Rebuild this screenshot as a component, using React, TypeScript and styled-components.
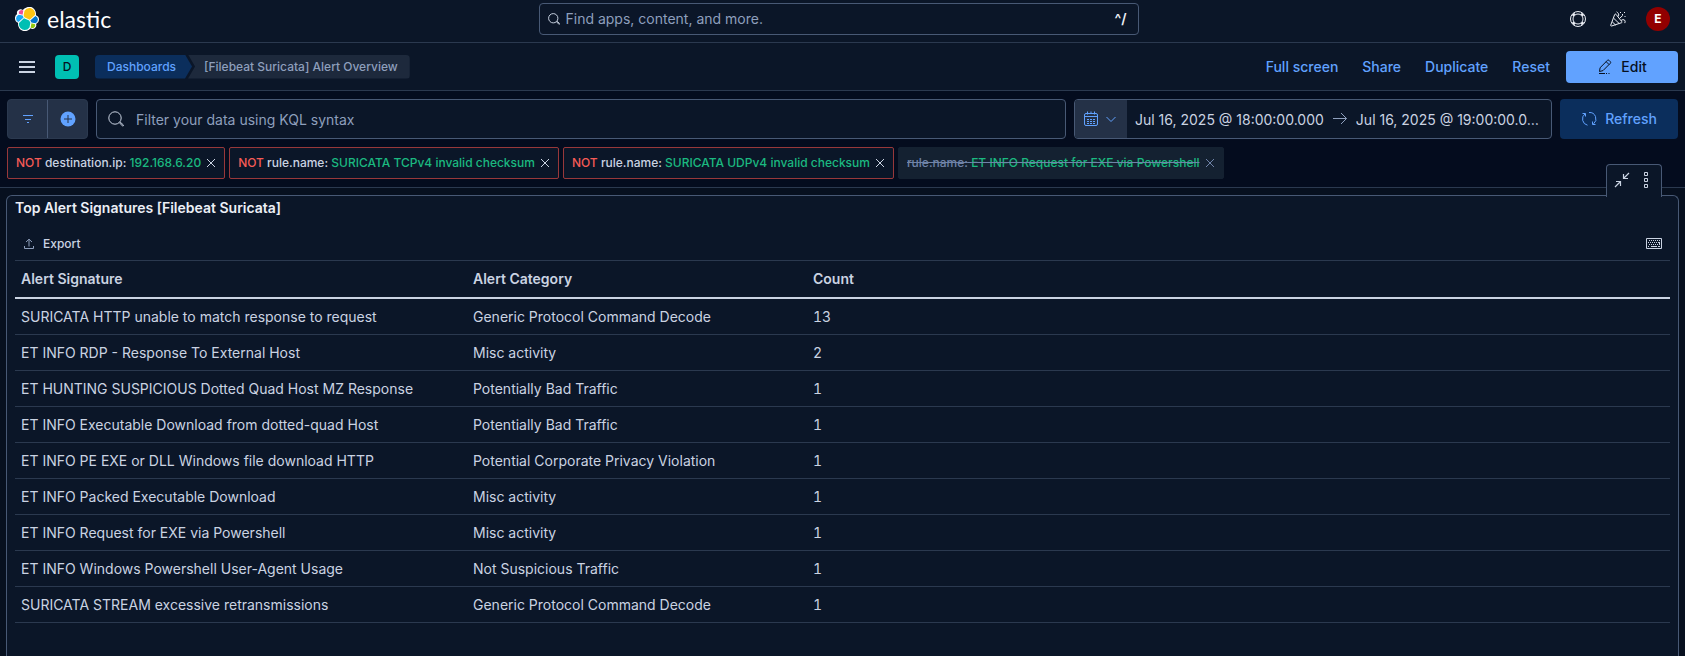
import React from "react";
import styled, { createGlobalStyle, css } from "styled-components";

const c = {
  page: "#07101f",
  bar: "#040c1e",
  panel: "#0b1628",
  line: "#2b394f",
  field: "#485975",
  text: "#cad3e2",
  subdued: "#8e9fbc",
  heading: "#eceff6",
  primary: "#61a2ff",
  primaryBase: "#0b2e5c",
  addon: "#243147",
  green: "#1bb980",
  red: "#f65b56",
  redLine: "#98383a",
};

const GlobalStyle = createGlobalStyle`
  * { box-sizing: border-box; }
  html, body, #root { margin: 0; height: 100%; }
  body {
    background: ${c.page};
    color: ${c.text};
    font: 400 14px/20px Inter, "Liberation Sans", sans-serif;
  }
  button, input { font: inherit; color: inherit; margin: 0; }
  button { border: 0; padding: 0; background: none; cursor: pointer; }
  a { text-decoration: none; color: inherit; }
  svg { display: block; flex: none; }
`;

const Page = styled.div`
  display: flex;
  flex-direction: column;
  min-height: 100%;
`;

const TopBar = styled.header`
  display: grid;
  grid-template-columns: 1fr minmax(200px, 600px) 1fr;
  align-items: center;
  padding: 3px 15px 7px 7px;
  background: ${c.panel};
  border-bottom: 1px solid ${c.line};
`;

const Brand = styled.a`
  display: flex;
  align-items: center;
  gap: 8px;
  padding-left: 8px;
  color: #fff;
  font: 400 23px/32px Lato, sans-serif;
`;

const GlobalSearch = styled.label`
  display: flex;
  align-items: center;
  gap: 6px;
  height: 32px;
  padding: 0 11px 0 8px;
  border: 1px solid ${c.field};
  border-radius: 4px;
`;

const BareInput = styled.input`
  flex: 1;
  min-width: 0;
  padding: 0;
  border: 0;
  outline: 0;
  background: none;
  &::placeholder { color: ${c.subdued}; opacity: 1; }
`;

const Shortcut = styled.span`
  color: ${c.heading};
  font-weight: 600;
`;

const TopActions = styled.div`
  display: flex;
  justify-content: flex-end;
  align-items: center;
  gap: 16px;
  color: ${c.heading};
`;

const IconButton = styled.button`
  display: grid;
  place-items: center;
  width: 24px;
  height: 24px;
`;

const UserAvatar = styled(IconButton)`
  border-radius: 50%;
  background: #920000;
  color: #fff;
  font-size: 12px;
  font-weight: 700;
`;

const NavBar = styled.div`
  display: flex;
  align-items: center;
  height: 48px;
  padding: 0 7px 0 17px;
  background: ${c.panel};
  border-bottom: 1px solid ${c.line};
`;

const SpaceBadge = styled.button`
  width: 24px;
  height: 24px;
  margin: 0 16px 0 18px;
  border-radius: 4px;
  background: #00bfb3;
  color: #07101f;
  font-size: 12px;
  font-weight: 500;
`;

const Crumbs = styled.nav`
  display: flex;
  font-size: 12px;
  font-weight: 500;
  line-height: 24px;
`;

const CrumbLink = styled.a`
  padding: 0 16px 0 12px;
  border-radius: 4px 0 0 4px;
  background: ${c.primaryBase};
  color: ${c.primary};
  clip-path: polygon(0 0, calc(100% - 7px) 0, 100% 50%, calc(100% - 7px) 100%, 0 100%);
`;

const CrumbCurrent = styled.span`
  margin-left: -4px;
  padding: 0 12px 0 16px;
  border-radius: 0 4px 4px 0;
  background: #1d293c;
  color: ${c.subdued};
  clip-path: polygon(0 0, 100% 0, 100% 100%, 0 100%, 7px 50%);
`;

const NavActions = styled.div`
  display: flex;
  align-items: center;
  gap: 24px;
  margin-left: auto;
  color: ${c.primary};
  font-weight: 500;
`;

const ActionButton = styled.button<{ $solid?: boolean }>`
  display: flex;
  align-items: center;
  justify-content: center;
  gap: 8px;
  border-radius: 4px;
  font-weight: 500;
  ${(p) =>
    p.$solid
      ? css`
          width: 112px;
          height: 32px;
          margin-left: -8px;
          background: ${c.primary};
          color: #07101f;
        `
      : css`
          width: 118px;
          height: 40px;
          background: ${c.primaryBase};
          color: ${c.primary};
        `}
`;

const SearchArea = styled.section`
  display: flex;
  flex-direction: column;
  gap: 8px;
  padding: 8px 7px;
  background: ${c.bar};
  border-bottom: 1px solid ${c.line};
`;

const QueryRow = styled.div`
  display: flex;
  gap: 8px;
  height: 40px;
`;

const FilterButtons = styled.div`
  display: flex;
  width: 81px;
  border: 1px solid ${c.line};
  border-radius: 4px;
  background: ${c.addon};
  color: ${c.primary};
`;

const FilterButton = styled.button`
  display: flex;
  flex: 1;
  align-items: center;
  justify-content: center;
  & + & { border-left: 1px solid ${c.field}; }
`;

const QueryField = styled.label`
  display: flex;
  flex: 1;
  align-items: center;
  gap: 12px;
  padding: 0 11px;
  border: 1px solid ${c.field};
  border-radius: 4px;
  background: ${c.panel};
`;

const QueryInput = styled(BareInput)`
  padding-top: 2px;
`;

const DateField = styled.div`
  display: flex;
  align-items: center;
  width: 478px;
  border: 1px solid ${c.field};
  border-radius: 4px;
  background: ${c.panel};
  overflow: hidden;
`;

const DateMenu = styled.button`
  display: flex;
  align-items: center;
  gap: 4px;
  height: 100%;
  margin-right: 8px;
  padding: 0 8px;
  background: ${c.addon};
  color: ${c.primary};
`;

const DateButton = styled.button`
  min-width: 0;
  padding-top: 2px;
  overflow: hidden;
  text-overflow: ellipsis;
  white-space: nowrap;
`;

const DateArrow = styled.span`
  padding: 0 8px;
  color: ${c.subdued};
`;

const Pills = styled.div`
  display: flex;
  flex-wrap: wrap;
  gap: 4px;
`;

const Pill = styled.div<{ $off?: boolean }>`
  display: flex;
  align-items: center;
  gap: 4px;
  height: 32px;
  padding: 0 7px 0 8px;
  border: 1px solid ${(p) => (p.$off ? "#142131" : c.redLine)};
  border-radius: 2px;
  background: ${(p) => (p.$off ? "#142131" : c.panel)};
  color: ${(p) => (p.$off ? "#6f83a8" : c.text)};
  font-size: 12px;
  font-weight: 500;
  white-space: nowrap;
`;

const PillLabel = styled.button<{ $off?: boolean }>`
  font-weight: 500;
  text-decoration: ${(p) => (p.$off ? "line-through" : "none")};
`;

const Not = styled.span`
  color: ${c.red};
`;

const Value = styled.span`
  color: ${c.green};
`;

const Panel = styled.main`
  position: relative;
  flex: 1;
  margin: 7px 6px 0;
  padding: 0 8px 24px;
  border: 1px solid ${c.field};
  border-bottom: 0;
  border-radius: 6px 6px 0 0;
  background: ${c.panel};
`;

const PanelTab = styled.div`
  position: absolute;
  right: 16px;
  bottom: 100%;
  display: flex;
  justify-content: space-between;
  align-items: center;
  width: 56px;
  height: 33px;
  margin-bottom: -1px;
  padding: 0 12px 2px 7px;
  border: 1px solid ${c.field};
  border-bottom: 0;
  border-radius: 4px 4px 0 0;
  background: ${c.panel};
`;

const PanelTitle = styled.h2`
  margin: 0;
  color: ${c.heading};
  font-size: 14px;
  font-weight: 600;
  line-height: 24px;
`;

const GridTools = styled.div`
  display: flex;
  justify-content: space-between;
  align-items: center;
  height: 40px;
  padding: 8px 8px 0;
`;

const ExportButton = styled.button`
  display: flex;
  align-items: center;
  gap: 8px;
  font-size: 12px;
  font-weight: 500;
`;

const Grid = styled.table`
  width: 100%;
  border-collapse: separate;
  border-spacing: 0;
  table-layout: fixed;
  border-top: 1px solid ${c.line};
`;

const HeadCell = styled.th<{ $width?: number }>`
  width: ${(p) => (p.$width ? `${p.$width}px` : "auto")};
  height: 38px;
  padding: 0 6px;
  border-bottom: 2px solid ${c.text};
  font-weight: 600;
  text-align: left;
`;

const Cell = styled.td<{ $numeric?: boolean }>`
  height: 36px;
  padding: 0 6px;
  border-bottom: 1px solid ${c.line};
  font-variant-numeric: ${(p) => (p.$numeric ? "tabular-nums" : "normal")};
`;

const SearchIcon = ({ size }: { size: number }) => (
  <svg width={size} height={size} viewBox="0 0 16 16" fill="none" stroke={c.text} strokeWidth={size < 16 ? 1.3 : 1}>
    <circle cx="7" cy="7" r="6.2" />
    <path d="M11.3 11.6 14.4 14.9q.5.5.9 0t0-1L12.1 11" />
  </svg>
);

const ElasticLogo = () => (
  <svg width="24" height="24" viewBox="0 0 32 32">
    <path fill="#fff" d="M32 16.77a6.334 6.334 0 0 0-1.14-3.63 6.269 6.269 0 0 0-3.02-2.3 9.044 9.044 0 0 0 .15-1.71 9.1 9.1 0 0 0-1.72-5.38A9.01 9.01 0 0 0 15.4.54a9.02 9.02 0 0 0-5.02 3.38 4.83 4.83 0 0 0-2.95-1.01 4.86 4.86 0 0 0-4.59 6.5A6.38 6.38 0 0 0 0 15.2c0 1.31.4 2.59 1.15 3.66a6.34 6.34 0 0 0 3.03 2.3 9.12 9.12 0 0 0-.15 1.71 9.08 9.08 0 0 0 1.72 5.36 8.99 8.99 0 0 0 14.87-.03 4.83 4.83 0 0 0 2.95 1.01 4.86 4.86 0 0 0 4.59-6.5A6.38 6.38 0 0 0 32 16.77" />
    <path fill="#FEC514" d="m12.58 13.787 7.002 3.211 7.066-6.213a7.849 7.849 0 0 0 .152-1.557c0-4.287-3.464-7.762-7.737-7.762a7.715 7.715 0 0 0-6.377 3.374l-1.176 6.118z" />
    <path fill="#00BFB3" d="M5.333 21.215a7.99 7.99 0 0 0-.15 1.586c0 4.299 3.477 7.784 7.764 7.784a7.755 7.755 0 0 0 6.407-3.412l1.166-6.095-1.557-2.985-7.03-3.211z" />
    <path fill="#F04E98" d="m5.288 9.067 4.8 1.137 1.05-5.468a3.777 3.777 0 0 0-5.85 4.33" />
    <path fill="#1BA9F5" d="M4.872 10.214a5.294 5.294 0 0 0-3.5 4.995 5.265 5.265 0 0 0 3.374 4.927l6.733-6.102-1.236-2.65z" />
    <path fill="#93C90E" d="M20.872 27.171a3.772 3.772 0 0 0 5.853-4.327l-4.795-1.125z" />
    <path fill="#07C" d="m21.846 20.563 5.28 1.238a5.293 5.293 0 0 0 3.5-4.997 5.265 5.265 0 0 0-3.381-4.917l-6.904 6.068z" />
  </svg>
);

const HelpIcon = () => (
  <svg width="16" height="16" viewBox="0 0 16 16" fill="none" stroke="currentColor">
    <circle cx="8" cy="8" r="7.5" />
    <circle cx="8" cy="8" r="5" />
    <path strokeWidth="3" d="m2.900 2.900 1.500 1.500M13.100 2.900l-1.500 1.500M2.900 13.100l1.500-1.500M13.100 13.100l-1.500-1.500" />
  </svg>
);

const CheerIcon = () => (
  <svg width="16" height="16" viewBox="0 0 16 16" fill="none" stroke="currentColor">
    <path d="M4.7 3.500.7 14.200q-.2.9.9.8l10-3.300q.8-.4.2-1L6 3.300q-.8-.7-1.300.2Z" />
    <path d="m3.600 7.200 5.600 5.300M2.200 10.800l3.600 3.400M8 5.600q1.600-1.400.2-3.400-.6-.8-1.600-1.400M9.600 7.400l3.200-3M11 9.500q2-1.600 3.600-.4 1 1 .2 3" />
    <path d="M10 1.500h1M12 3.500h1M14 1.500h1M14.500 5.500h1" />
  </svg>
);

const PencilIcon = () => (
  <svg width="16" height="16" viewBox="0 0 16 16" fill="none" stroke="currentColor">
    <path d="m2.500 12.500.6-3.800L10.500 1.300q.8-.6 1.500 0l1.400 1.500q.6.700 0 1.400L6 11.600ZM9.200 2.700l2.900 2.900M2 14.500h6M9 14.500h1M11.500 14.500h1" />
  </svg>
);

const MenuIcon = () => (
  <svg width="20" height="16" viewBox="0 0 20 16" fill="currentColor">
    <path d="M2 2h16v2H2zM2 7h16v2H2zM2 12h16v2H2z" />
  </svg>
);

const FilterIcon = () => (
  <svg width="16" height="16" viewBox="0 0 16 16" fill="currentColor">
    <path d="M3 4h10v1H3zM5 8h6v1H5zM7 11h2v1H7z" />
  </svg>
);

const PlusIcon = () => (
  <svg width="16" height="16" viewBox="0 0 16 16">
    <circle cx="8" cy="8" r="7.500" fill="currentColor" />
    <path stroke={c.addon} d="M8 4v8M4 8h8" />
  </svg>
);

const CalendarIcon = () => (
  <svg width="16" height="16" viewBox="0 0 16 16" fill="none" stroke="currentColor">
    <rect x="1.500" y="2.500" width="13" height="12" rx="1.500" />
    <path d="M4.500.5v3M8 .5v2M11.500.5v3M2 5.500h12" />
    <path strokeDasharray="2 1" d="M4 8.500h8M4 10.500h8M4 12.500h8" />
  </svg>
);

const ChevronIcon = () => (
  <svg width="16" height="16" viewBox="0 0 16 16" fill="none" stroke="currentColor">
    <path d="m3.500 6 4.500 4.500L12.500 6" />
  </svg>
);

const ArrowIcon = () => (
  <svg width="16" height="16" viewBox="0 0 16 16" fill="none" stroke="currentColor">
    <path d="M1 7.500h13.500M9 2l5.500 5.500L9 13" />
  </svg>
);

const RefreshIcon = () => (
  <svg width="16" height="16" viewBox="0 0 16 16" fill="none" stroke="currentColor">
    <path d="M6.500 14.200A6.400 6.400 0 0 1 4 2.900M1.500 2.500h3v3M8 1.500a6.400 6.400 0 0 1 4.500 11.400M14.500 13.500h-3v-3" />
  </svg>
);

const CrossIcon = () => (
  <svg width="12" height="12" viewBox="0 0 12 12" fill="none" stroke="currentColor">
    <path d="m2 2 8 8M10 2l-8 8" />
  </svg>
);

const MinimizeIcon = () => (
  <svg width="16" height="16" viewBox="0 0 16 16" fill="none" stroke="currentColor" strokeWidth="1.2">
    <path d="M15 1 9.500 6.500M9.500 2v4.500H14M1 15l5.500-5.500M2 9.500h4.500V14" />
  </svg>
);

const BoxesIcon = () => (
  <svg width="5" height="16" viewBox="0 0 5 16" fill="none" stroke="currentColor">
    <path d="M.5.5h3v3h-3zM.5 6.500h3v3h-3zM.5 12.500h3v3h-3z" />
  </svg>
);

const ExportIcon = () => (
  <svg width="12" height="12" viewBox="0 0 12 12" fill="none" stroke={c.subdued}>
    <path d="M6 8.500v-7M3 4l3-2.800L9 4M1.500 8v2.500h9V8" />
  </svg>
);

const KeyboardIcon = () => (
  <svg width="16" height="16" viewBox="0 0 16 16" fill="none" stroke="currentColor">
    <path d="M.5 2.500h15v10H.5z" />
    <path strokeDasharray="1 1" d="M3 4.500h11M2 6.500h11M3 8.500h11" />
    <path d="M2 10.500h1M5 10.500h6M12 10.500h2M13.500 6v3" />
  </svg>
);

const filters = [
  { field: "destination.ip:", value: "192.168.6.20" },
  { field: "rule.name:", value: "SURICATA TCPv4 invalid checksum" },
  { field: "rule.name:", value: "SURICATA UDPv4 invalid checksum" },
  { field: "rule.name:", value: "ET INFO Request for EXE via Powershell", off: true },
];

const rows: [string, string, number][] = [
  ["SURICATA HTTP unable to match response to request", "Generic Protocol Command Decode", 13],
  ["ET INFO RDP - Response To External Host", "Misc activity", 2],
  ["ET HUNTING SUSPICIOUS Dotted Quad Host MZ Response", "Potentially Bad Traffic", 1],
  ["ET INFO Executable Download from dotted-quad Host", "Potentially Bad Traffic", 1],
  ["ET INFO PE EXE or DLL Windows file download HTTP", "Potential Corporate Privacy Violation", 1],
  ["ET INFO Packed Executable Download", "Misc activity", 1],
  ["ET INFO Request for EXE via Powershell", "Misc activity", 1],
  ["ET INFO Windows Powershell User-Agent Usage", "Not Suspicious Traffic", 1],
  ["SURICATA STREAM excessive retransmissions", "Generic Protocol Command Decode", 1],
];

export default function App() {
  return (
    <Page>
      <GlobalStyle />
      <TopBar>
        <Brand href="#">
          <ElasticLogo />
          elastic
        </Brand>
        <GlobalSearch>
          <SearchIcon size={12} />
          <BareInput aria-label="Find apps, content, and more" placeholder="Find apps, content, and more." />
          <Shortcut>^/</Shortcut>
        </GlobalSearch>
        <TopActions>
          <IconButton aria-label="Help"><HelpIcon /></IconButton>
          <IconButton aria-label="What's new"><CheerIcon /></IconButton>
          <UserAvatar>E</UserAvatar>
        </TopActions>
      </TopBar>

      <NavBar>
        <button aria-label="Menu"><MenuIcon /></button>
        <SpaceBadge>D</SpaceBadge>
        <Crumbs aria-label="Breadcrumbs">
          <CrumbLink href="#">Dashboards</CrumbLink>
          <CrumbCurrent>[Filebeat Suricata] Alert Overview</CrumbCurrent>
        </Crumbs>
        <NavActions>
          <a href="#">Full screen</a>
          <a href="#">Share</a>
          <a href="#">Duplicate</a>
          <a href="#">Reset</a>
          <ActionButton $solid>
            <PencilIcon />
            Edit
          </ActionButton>
        </NavActions>
      </NavBar>

      <SearchArea>
        <QueryRow>
          <FilterButtons>
            <FilterButton aria-label="Filter menu"><FilterIcon /></FilterButton>
            <FilterButton aria-label="Add filter"><PlusIcon /></FilterButton>
          </FilterButtons>
          <QueryField>
            <SearchIcon size={16} />
            <QueryInput aria-label="Query" placeholder="Filter your data using KQL syntax" />
          </QueryField>
          <DateField>
            <DateMenu aria-label="Quick dates">
              <CalendarIcon />
              <ChevronIcon />
            </DateMenu>
            <DateButton>Jul 16, 2025 @ 18:00:00.000</DateButton>
            <DateArrow><ArrowIcon /></DateArrow>
            <DateButton>Jul 16, 2025 @ 19:00:00.0…</DateButton>
          </DateField>
          <ActionButton>
            <RefreshIcon />
            Refresh
          </ActionButton>
        </QueryRow>
        <Pills>
          {filters.map((f) => (
            <Pill key={f.value} $off={f.off}>
              <PillLabel $off={f.off}>
                {!f.off && <Not>NOT </Not>}
                {f.field} <Value>{f.value}</Value>
              </PillLabel>
              <button aria-label="Remove filter"><CrossIcon /></button>
            </Pill>
          ))}
        </Pills>
      </SearchArea>

      <Panel>
        <PanelTab>
          <button aria-label="Minimize"><MinimizeIcon /></button>
          <button aria-label="Panel options"><BoxesIcon /></button>
        </PanelTab>
        <PanelTitle>Top Alert Signatures [Filebeat Suricata]</PanelTitle>
        <GridTools>
          <ExportButton>
            <ExportIcon />
            Export
          </ExportButton>
          <button aria-label="Keyboard shortcuts"><KeyboardIcon /></button>
        </GridTools>
        <Grid>
          <thead>
            <tr>
              <HeadCell $width={452}>Alert Signature</HeadCell>
              <HeadCell $width={340}>Alert Category</HeadCell>
              <HeadCell>Count</HeadCell>
            </tr>
          </thead>
          <tbody>
            {rows.map(([signature, category, count]) => (
              <tr key={signature}>
                <Cell>{signature}</Cell>
                <Cell>{category}</Cell>
                <Cell $numeric>{count}</Cell>
              </tr>
            ))}
          </tbody>
        </Grid>
      </Panel>
    </Page>
  );
}
